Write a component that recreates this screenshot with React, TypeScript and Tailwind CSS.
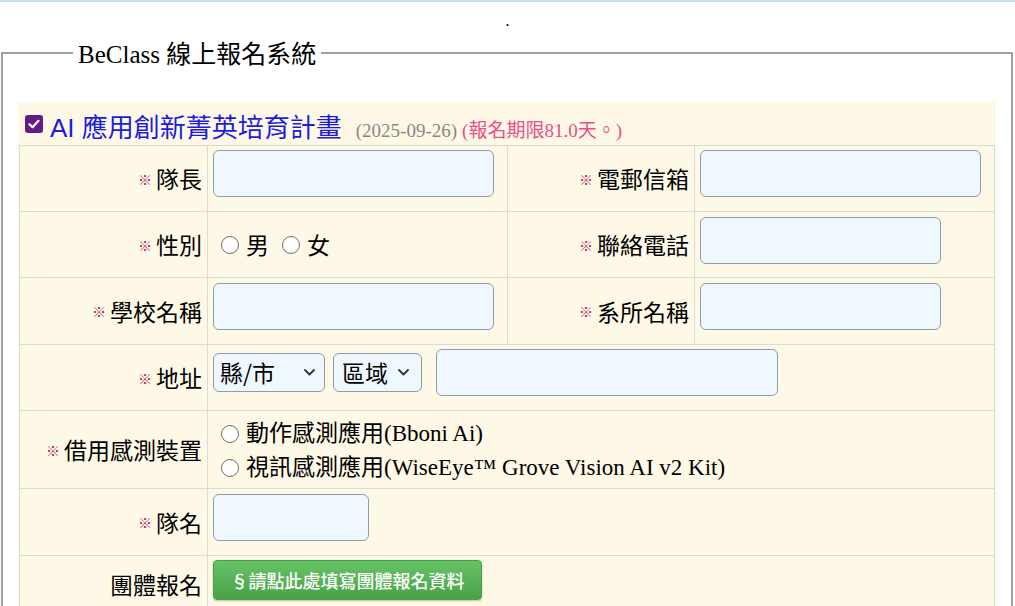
import React from "react";

const serifStack = "font-['Liberation_Serif','Noto_Sans_CJK_TC',serif]";
const sansStack = "font-['Liberation_Sans','Noto_Sans_CJK_TC',sans-serif]";

function Label({ text, req = true }: { text: string; req?: boolean }) {
  return (
    <div className="bg-[#fef8e6] flex items-center justify-end pr-[5px]">
      {req && (
        <span className="text-[14px] leading-none text-[#a8195f] mr-[4px] font-['Noto_Sans_CJK_TC',sans-serif]">
          ※
        </span>
      )}
      <span className="text-[23px] leading-none text-black font-['Noto_Sans_CJK_TC',sans-serif]">{text}</span>
    </div>
  );
}

function TextBox({ w }: { w: string }) {
  return <div className={`${w} h-[47px] bg-[#f0f8ff] border border-[#8e9cab] rounded-[6px]`} />;
}

function Radio() {
  return <span className="inline-block w-[18px] h-[18px] rounded-full border border-[#6f6f6f] bg-white shrink-0" />;
}

function Chevron() {
  return (
    <svg width="11" height="7" viewBox="0 0 11 7" className="shrink-0">
      <path d="M1 1l4.5 4.5L10 1" fill="none" stroke="#333" strokeWidth="1.8" strokeLinecap="round" strokeLinejoin="round" />
    </svg>
  );
}

export default function App() {
  return (
    <div className={`w-[1015px] min-h-[606px] bg-white ${serifStack} text-black`}>
      <div className="h-[2px] bg-[#c6dff6]" />
      <div className="h-[33px] text-center text-[16px] leading-[20px] pt-[9px]">.</div>
      <fieldset className="ml-[1px] mr-[3px] border-2 border-[#a0a0a0] px-[15px] pt-[31px] pb-[20px]">
        <legend className="ml-[55px] px-[5px] text-[25px] leading-[36px]">
          <span className="relative top-[2px]">BeClass 線上報名系統</span>
        </legend>
        <div className="bg-[#fef8e6] px-[1px]">
          <div className="h-[43px] flex items-center pl-[6px]">
            <span className="w-[18px] h-[18px] rounded-[3px] bg-[#641b86] flex items-center justify-center shrink-0">
              <svg width="12" height="10" viewBox="0 0 12 10">
                <path d="M1.5 5.2l3 3L10.5 1.8" fill="none" stroke="#fff" strokeWidth="2.2" strokeLinecap="round" strokeLinejoin="round" />
              </svg>
            </span>
            <span className="ml-[7px] flex items-baseline relative top-[6px]">
              <span className={`text-[26px] leading-[30px] text-[#1c1ce0] ${sansStack}`}>AI 應用創新菁英培育計畫</span>
              <span className="ml-[14px] text-[19px] text-[#888]">(2025-09-26)</span>
              <span className="ml-[5px] text-[19px] text-[#ea4f8a]">(報名期限81.0天。)</span>
            </span>
          </div>
          <div className="grid grid-cols-[187px_299px_186px_299px] grid-rows-[65px_65px_66px_65px_77px_66px_56px] gap-px bg-[#dddad2] border border-[#dddad2]">
            {/* Row 1 */}
            <Label text="隊長" />
            <div className="bg-[#fef8e6] pt-[4px] pl-[5px]">
              <TextBox w="w-[281px]" />
            </div>
            <Label text="電郵信箱" />
            <div className="bg-[#fef8e6] pt-[4px] pl-[5px]">
              <TextBox w="w-[281px]" />
            </div>

            {/* Row 2 */}
            <Label text="性別" />
            <div className="bg-[#fef8e6] flex items-center pl-[13px] text-[23px] leading-none font-['Noto_Sans_CJK_TC',sans-serif]">
              <Radio />
              <span className="ml-[7px]">男</span>
              <span className="ml-[13px] flex items-center">
                <Radio />
              </span>
              <span className="ml-[7px]">女</span>
            </div>
            <Label text="聯絡電話" />
            <div className="bg-[#fef8e6] pt-[5px] pl-[5px]">
              <TextBox w="w-[241px]" />
            </div>

            {/* Row 3 */}
            <Label text="學校名稱" />
            <div className="bg-[#fef8e6] pt-[5px] pl-[5px]">
              <TextBox w="w-[281px]" />
            </div>
            <Label text="系所名稱" />
            <div className="bg-[#fef8e6] pt-[5px] pl-[5px]">
              <TextBox w="w-[241px]" />
            </div>

            {/* Row 4 */}
            <Label text="地址" />
            <div className="col-span-3 bg-[#fef8e6] pt-[4px] pl-[5px]">
              <div className="flex items-center h-[47px] font-['Noto_Sans_CJK_TC',sans-serif] text-[23px] leading-none">
                <div className="w-[112px] h-[39px] bg-[#f0f8ff] border border-[#8e9cab] rounded-[6px] flex items-center justify-between pl-[6px] pr-[9px]">
                  <span>縣/市</span>
                  <Chevron />
                </div>
                <div className="ml-[8px] w-[89px] h-[39px] bg-[#f0f8ff] border border-[#8e9cab] rounded-[6px] flex items-center justify-between pl-[8px] pr-[12px]">
                  <span>區域</span>
                  <Chevron />
                </div>
                <div className="ml-[14px]">
                  <TextBox w="w-[342px]" />
                </div>
              </div>
            </div>

            {/* Row 5 */}
            <Label text="借用感測裝置" />
            <div className="col-span-3 bg-[#fef8e6] flex flex-col justify-center pl-[13px] pt-[3px] text-[23px] leading-[34px]">
              <div className="flex items-center">
                <Radio />
                <span className="ml-[7px]">動作感測應用(Bboni Ai)</span>
              </div>
              <div className="flex items-center">
                <Radio />
                <span className="ml-[7px]">視訊感測應用(WiseEye™ Grove Vision AI v2 Kit)</span>
              </div>
            </div>

            {/* Row 6 */}
            <Label text="隊名" />
            <div className="col-span-3 bg-[#fef8e6] pt-[5px] pl-[5px]">
              <TextBox w="w-[156px]" />
            </div>

            {/* Row 7 */}
            <Label text="團體報名" req={false} />
            <div className="col-span-3 bg-[#fef8e6] pt-[4px] pl-[5px]">
              <div className="w-[269px] h-[40px] rounded-[4px] border border-[#47a047] bg-linear-to-b from-[#66c466] to-[#48a148] shadow-[0_1px_2px_rgba(0,0,0,0.25)] flex items-center justify-center text-white text-[18px] font-medium font-['Noto_Sans_CJK_TC',sans-serif]">
                §請點此處填寫團體報名資料
              </div>
            </div>
          </div>
        </div>
      </fieldset>
    </div>
  );
}
